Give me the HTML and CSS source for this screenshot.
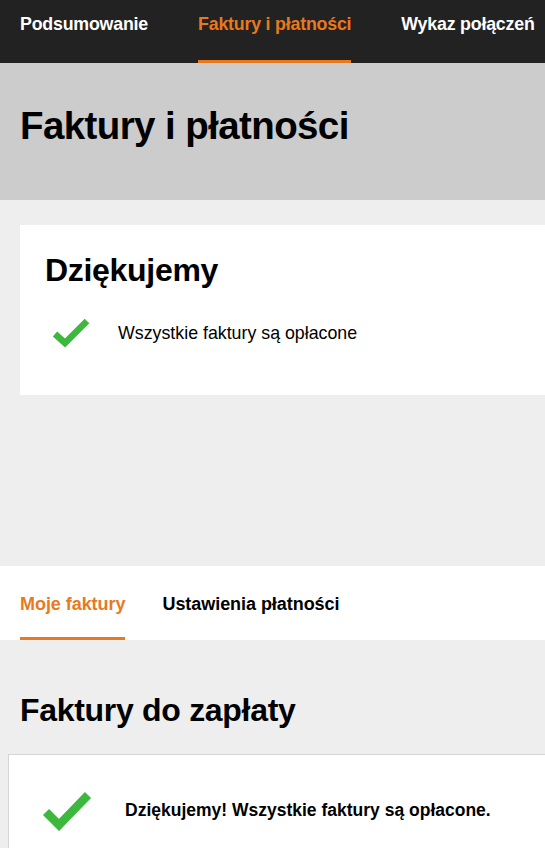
FILE: index.html
```html
<!DOCTYPE html>
<html lang="pl">
<head>
<meta charset="utf-8">
<link rel="stylesheet" href="styles.css">
</head>
<body>
<nav class="topnav">
  <a class="topnav-item">Podsumowanie</a>
  <a class="topnav-item active">Faktury i płatności</a>
  <a class="topnav-item">Wykaz połączeń</a>
</nav>
<header class="page-header">
  <h1>Faktury i płatności</h1>
</header>
<section class="summary">
  <div class="card">
    <h2>Dziękujemy</h2>
    <div class="status">
      <svg class="check" width="38" height="30" viewBox="0 0 38 30"><path d="M3 16 L13 25 L35 3" fill="none" stroke="#3cb93c" stroke-width="6.5"/></svg>
      <span>Wszystkie faktury są opłacone</span>
    </div>
  </div>
</section>
<nav class="tabs">
  <a class="tab active">Moje faktury</a>
  <a class="tab">Ustawienia płatności</a>
</nav>
<section class="invoices">
  <h2>Faktury do zapłaty</h2>
  <div class="paid-card">
    <svg class="check-lg" width="50" height="40" viewBox="0 0 50 40"><path d="M4 21 L17 34 L46 4" fill="none" stroke="#3cb93c" stroke-width="8.5"/></svg>
    <span>Dziękujemy! Wszystkie faktury są opłacone.</span>
  </div>
</section>
</body>
</html>
```
FILE: styles.css
```css
* { box-sizing: border-box; }
html, body { margin: 0; padding: 0; }
body {
  font-family: "Liberation Sans", Arial, sans-serif;
  background: #eeeeee;
  color: #000;
  width: 545px;
  overflow: hidden;
}
.topnav {
  background: #222222;
  height: 63px;
  display: flex;
  gap: 50px;
  padding-left: 20px;
  white-space: nowrap;
}
.topnav-item {
  color: #fff;
  font-weight: bold;
  font-size: 17.8px;
  letter-spacing: -0.2px;
  padding-top: 14px;
  border-bottom: 3px solid transparent;
}
.topnav-item.active {
  color: #e8791f;
  border-bottom-color: #e8791f;
}
.page-header {
  background: #cccccc;
  height: 137px;
  padding: 0 20px;
  display: flex;
  align-items: center;
}
.page-header h1 {
  margin: 0;
  font-size: 38.5px;
  letter-spacing: -0.6px;
  font-weight: bold;
  padding-bottom: 12px;
}
.summary {
  padding: 25px 0 0 20px;
  height: 366px;
}
.card {
  background: #fff;
  height: 170px;
  padding: 27px 25px 0;
}
.card h2 {
  margin: 0;
  font-size: 32px;
  letter-spacing: -0.3px;
  font-weight: bold;
}
.status {
  display: flex;
  align-items: center;
  margin-top: 29px;
  font-size: 17.8px;
}
.check { margin-left: 7px; margin-right: 28px; }
.tabs {
  background: #fff;
  height: 74px;
  display: flex;
  gap: 37px;
  padding-left: 20px;
}
.tab {
  font-weight: bold;
  font-size: 18px;
  letter-spacing: -0.05px;
  padding-top: 28px;
  border-bottom: 3px solid transparent;
}
.tab.active {
  color: #e8791f;
  border-bottom-color: #e8791f;
}
.invoices h2 {
  margin: 0;
  padding: 52px 20px 0;
  height: 114px;
  font-size: 32px;
  letter-spacing: -0.3px;
  font-weight: bold;
}
.paid-card {
  margin-left: 8px;
  background: #fff;
  border: 1px solid #d4d4d4;
  border-right: none;
  height: 120px;
  display: flex;
  align-items: flex-start;
  padding: 36px 0 0 33px;
  font-weight: bold;
  font-size: 17.5px;
}
.paid-card span { margin-left: 33px; margin-top: 9px; }
```
